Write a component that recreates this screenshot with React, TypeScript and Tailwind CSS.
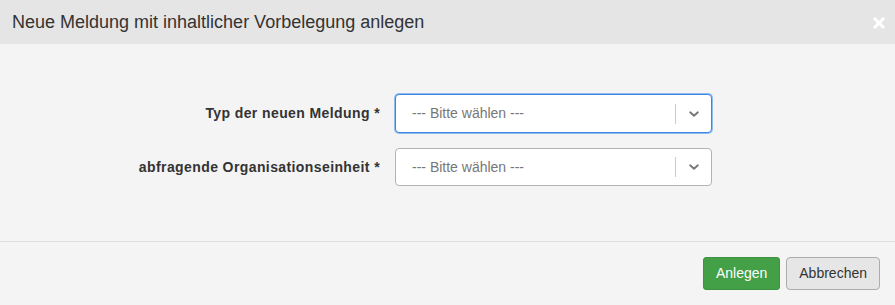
import React from 'react';

const font = { fontFamily: '"Liberation Sans", Arial, sans-serif' };

function Chevron() {
  return (
    <svg width="14" height="14" viewBox="0 0 20 20" className="text-[#777]">
      <path d="M4.5 7.5 L10 12.5 L15.5 7.5" fill="none" stroke="currentColor" strokeWidth="2.6" strokeLinecap="round" strokeLinejoin="round" />
    </svg>
  );
}

function SelectBox({ focused }: { focused?: boolean }) {
  return (
    <div
      className={
        focused
          ? 'flex items-center w-[317px] h-[39px] bg-white rounded-[4px] border border-[#3b86e0] shadow-[0_0_0_1px_#8fbdf0]'
          : 'flex items-center w-[317px] h-[38px] bg-white rounded-[4px] border border-[#b3b3b3]'
      }
    >
      <span className="flex-1 pl-[16px] text-[14px] text-[#777]">--- Bitte wählen ---</span>
      <span className="w-px h-[20px] bg-[#cccccc]" />
      <span className="w-[35px] flex items-center justify-center pl-[1px]">
        <Chevron />
      </span>
    </div>
  );
}

function FormRow({ label, focused }: { label: string; focused?: boolean }) {
  return (
    <div className="flex items-center">
      <label className="w-[380px] text-right text-[14px] tracking-[0.4px] font-bold text-[#333]">{label}</label>
      <div className="ml-[15px]">
        <SelectBox focused={focused} />
      </div>
    </div>
  );
}

export default function App() {
  return (
    <div className="w-[895px] h-[305px] bg-[#f4f4f4] flex flex-col" style={font}>
      {/* Header */}
      <div className="h-[44px] bg-[#e5e5e5] flex items-center justify-between pl-[12px] pr-[10px]">
        <h4 className="text-[18px] text-[#333] leading-none">Neue Meldung mit inhaltlicher Vorbelegung anlegen</h4>
        <svg width="12" height="12" viewBox="0 0 12 12" className="mt-[1px]">
          <path d="M2 2 L10 10 M10 2 L2 10" stroke="#ffffff" strokeWidth="3" strokeLinecap="square" />
        </svg>
      </div>

      {/* Body */}
      <div className="flex flex-col gap-[15px] pt-[50px] h-[197px]">
        <FormRow label="Typ der neuen Meldung *" focused />
        <FormRow label="abfragende Organisationseinheit *" />
      </div>

      {/* Footer */}
      <div className="border-t border-[#e0e0e0] flex justify-end gap-[6px] pt-[15px] pr-[15px]">
        <button className="h-[33px] px-[12px] rounded-[3px] bg-[#43a047] border border-[#3d9140] text-white text-[14px]">
          Anlegen
        </button>
        <button className="h-[33px] px-[12px] rounded-[4px] bg-[#e6e6e6] border border-[#adadad] text-[#333] text-[14px]">
          Abbrechen
        </button>
      </div>
    </div>
  );
}
